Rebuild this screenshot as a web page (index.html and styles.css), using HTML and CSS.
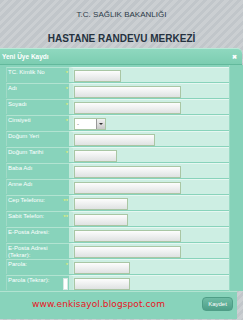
FILE: index.html
```html
<!DOCTYPE html>
<html lang="tr">
<head>
    <meta charset="UTF-8">
    <meta name="viewport" content="width=device-width, initial-scale=1.0">
    <title>Hastane Randevu Merkezi</title>
    <link rel="stylesheet" href="styles.css">
</head>
<body>
    <header class="top">
        <p class="ministry">T.C. SAĞLIK BAKANLIĞI</p>
        <h1>HASTANE RANDEVU MERKEZİ</h1>
    </header>
    <section class="dialog">
        <div class="dialog-title">
            <span>Yeni Üye Kaydı</span>
            <span class="close">&#x2716;</span>
        </div>
        <div class="dialog-body">
            <div class="form">
                <div class="row"><div class="label">TC. Kimlik No<span class="req">*</span></div><div class="field"><span class="input" style="width:45px"></span></div></div>
                <div class="row"><div class="label">Adı<span class="req">*</span></div><div class="field"><span class="input" style="width:105px"></span></div></div>
                <div class="row"><div class="label">Soyadı<span class="req">*</span></div><div class="field"><span class="input" style="width:105px"></span></div></div>
                <div class="row"><div class="label">Cinsiyeti<span class="req">*</span></div><div class="field"><span class="select"><span class="select-text">-</span><span class="select-btn"></span></span></div></div>
                <div class="row"><div class="label">Doğum Yeri</div><div class="field"><span class="input" style="width:79px"></span></div></div>
                <div class="row"><div class="label">Doğum Tarihi<span class="req">*</span></div><div class="field"><span class="input" style="width:41px"></span></div></div>
                <div class="row"><div class="label">Baba Adı</div><div class="field"><span class="input" style="width:105px"></span></div></div>
                <div class="row"><div class="label">Anne Adı</div><div class="field"><span class="input" style="width:105px"></span></div></div>
                <div class="row"><div class="label">Cep Telefonu:<span class="req">**</span></div><div class="field"><span class="input" style="width:52px"></span></div></div>
                <div class="row"><div class="label">Sabit Telefon:<span class="req">**</span></div><div class="field"><span class="input" style="width:52px"></span></div></div>
                <div class="row"><div class="label">E-Posta Adresi:</div><div class="field"><span class="input" style="width:105px"></span></div></div>
                <div class="row"><div class="label two">E-Posta Adresi<br>(Tekrar):</div><div class="field"><span class="input" style="width:105px"></span></div></div>
                <div class="row"><div class="label">Parola:<span class="req">*</span></div><div class="field"><span class="input" style="width:54px"></span></div></div>
                <div class="row"><div class="label">Parola (Tekrar):<span class="scroll"></span></div><div class="field"><span class="input" style="width:54px"></span></div></div>
            </div>
            <div class="rail"></div>
        </div>
        <div class="footer">
            <span class="site">www.enkisayol.blogspot.com</span>
            <button class="save">Kaydet</button>
        </div>
    </section>
</body>
</html>
```

FILE: styles.css
```css
body {
    margin: 0;
    font-family: 'Liberation Sans', Arial, sans-serif;
    background: repeating-linear-gradient(135deg, #c1c6ca 0, #c1c6ca 3px, #cbcfd2 3px, #cbcfd2 6px);
    height: 320px;
    overflow: hidden;
}
.top {
    height: 48px;
    text-align: center;
    color: #2b3a48;
}
.ministry {
    margin: 0;
    padding-top: 10px;
    font-size: 8px;
    line-height: 10px;
}
.top h1 {
    margin: 0;
    padding-top: 13px;
    font-size: 10px;
    line-height: 12px;
    color: #25323f;
}
.dialog {
    width: 243px;
}
.dialog-title {
    height: 15px;
    width: 240px;
    background: linear-gradient(#8fd8bf, #7ccdb1);
    border-top: 1px solid #b9e9d8;
    border-bottom: 1px solid #63b99c;
    border-radius: 0 5px 0 0;
    display: flex;
    align-items: center;
    justify-content: space-between;
    padding-left: 2px;
    box-sizing: content-box;
    color: #fff;
    font-size: 6.5px;
    font-weight: bold;
}
.close {
    font-size: 6px;
    margin-right: 5px;
}
.dialog-body {
    display: flex;
    background: #e4f4ee;
}
.form {
    width: 224px;
    background: #88d3bb;
    padding: 2px 0 0 6px;
}
.rail {
    width: 13px;
    background: #86d2b9;
    border-left: 1px solid #9bdac5;
}
.row {
    display: flex;
    height: 15px;
    margin-bottom: 1px;
}
.label {
    width: 61px;
    position: relative;
    border-top: 1px solid #b2e3d1;
    border-left: 1px solid #a0dac6;
    padding: 1px 0 0 1px;
    color: #fff;
    font-size: 6px;
    line-height: 7px;
}
.req {
    position: absolute;
    right: 1px;
    top: 2px;
    color: #f2f26a;
    font-size: 6px;
}
.scroll {
    position: absolute;
    right: 1px;
    top: 2px;
    width: 3px;
    height: 10px;
    background: #fff;
    border: 1px solid #d8e8e3;
}
.field {
    flex: 1;
    background: #cdeee3;
    border-top: 1px solid #e6f7f1;
    border-left: 4px solid #c2e9db;
    padding: 2px 0 0 1px;
}
.input {
    display: block;
    height: 10px;
    border: 1px solid #a9c6a4;
    background: linear-gradient(#fdfdfd, #dfe2e2);
}
.select {
    display: flex;
    width: 30px;
    height: 10px;
    border: 1px solid #a9c6a4;
    background: #fff;
}
.select-text {
    flex: 1;
    font-size: 6px;
    line-height: 10px;
    padding-left: 2px;
    color: #555;
}
.select-btn {
    width: 8px;
    background: linear-gradient(#f2f2f2, #c8c8c8);
    border-left: 1px solid #999;
    position: relative;
}
.select-btn::after {
    content: "";
    position: absolute;
    left: 2px;
    top: 4px;
    border-left: 2px solid transparent;
    border-right: 2px solid transparent;
    border-top: 2px solid #333;
}
.footer {
    height: 28px;
    width: 237px;
    background: #88d3bb;
    border-top: 1px solid #b2e3d1;
    display: flex;
    align-items: flex-start;
    padding-top: 5px;
    box-sizing: border-box;
}
.site {
    margin-left: 32px;
    margin-top: 2px;
    color: #e8141e;
    font-family: 'DejaVu Sans', Verdana, sans-serif;
    font-size: 9px;
    letter-spacing: 0.1px;
}
.save {
    margin-left: auto;
    margin-right: 4px;
    width: 31px;
    height: 14px;
    padding: 0;
    border: 1px solid #4f9e87;
    border-radius: 4px;
    background: linear-gradient(#6fbca5, #4e9f88);
    color: #fff;
    font-family: 'Liberation Sans', Arial, sans-serif;
    font-size: 6px;
}
```
